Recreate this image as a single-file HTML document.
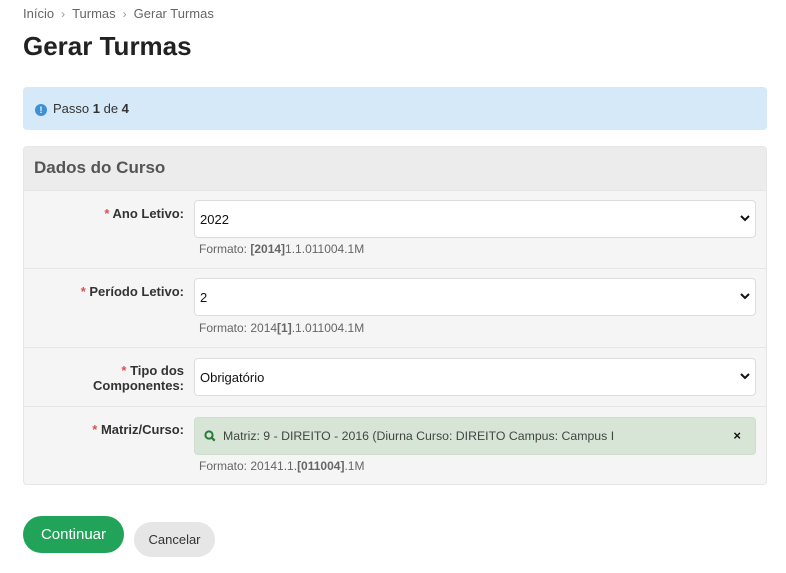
<!DOCTYPE html>
<html><head><meta charset="utf-8"><style>
*{box-sizing:border-box}
body{margin:0;width:786px;height:573px;background:#fff;font-family:"Liberation Sans",sans-serif;color:#333;position:relative;overflow:hidden}
.a{position:absolute}
.bc{left:23px;top:6px;font-size:13px;color:#666}
.bc span{color:#999;margin:0 7px;font-size:12px}
h1{position:absolute;left:23px;top:31px;margin:0;font-size:26px;font-weight:bold;color:#222}
.alert{left:23px;top:87px;width:744px;height:43px;background:#d6e9f8;border-radius:4px;font-size:13px;color:#333;padding:14px 0 0 30px}
.ic{position:absolute;left:12px;top:17px;width:12px;height:12px;border-radius:50%;background:#3d8fd6;color:#fff;font-size:9px;font-weight:bold;text-align:center;line-height:12px}
.panel{left:23px;top:146px;width:744px;height:339px;background:#f5f5f5;border:1px solid #e6e6e6;border-radius:4px;overflow:hidden}
.ph{height:43px;background:#ececec;font-size:17px;font-weight:bold;color:#555;padding:11px 0 0 10px}
.row{position:absolute;left:0;width:742px;border-top:1px solid #e6e6e6}
.lab{position:absolute;right:582px;text-align:right;font-size:13px;font-weight:bold;color:#333;line-height:15px}
.lab b{color:#d9534f}
.sel{position:absolute;left:170px;width:562px;height:38px;background:#fff;border:1px solid #ddd;border-radius:4px;font-size:13px;color:#111;padding:11px 0 0 5px}
.sel svg{position:absolute;right:5px;top:14px}
.help{position:absolute;left:175px;font-size:12px;color:#666}
.btn1{left:23px;top:516px;width:101px;height:37px;background:#22a35a;border-radius:19px;color:#fff;font-size:15px;text-align:center;line-height:37px}
.btn2{left:134px;top:522px;width:81px;height:35px;background:#e6e6e6;border-radius:18px;color:#333;font-size:13px;text-align:center;line-height:35px}
</style></head><body>
<div class="a bc">Início<span>›</span>Turmas<span>›</span>Gerar Turmas</div>
<h1>Gerar Turmas</h1>
<div class="a alert"><div class="ic">!</div>Passo <b>1</b> de <b>4</b></div>
<div class="a panel">
<div class="ph">Dados do Curso</div>
<div class="row" style="top:43px;height:78px">
<div class="lab" style="top:15px"><b>*</b> Ano Letivo:</div>
<div class="sel" style="top:9px">2022<svg width="10" height="7" viewBox="0 0 10 7"><path d="M1 1l4 4 4-4" stroke="#111" stroke-width="2" fill="none"/></svg></div>
<div class="help" style="top:51px">Formato: <b>[2014]</b>1.1.011004.1M</div>
</div>
<div class="row" style="top:121px;height:79px">
<div class="lab" style="top:15px"><b>*</b> Período Letivo:</div>
<div class="sel" style="top:9px">2<svg width="10" height="7" viewBox="0 0 10 7"><path d="M1 1l4 4 4-4" stroke="#111" stroke-width="2" fill="none"/></svg></div>
<div class="help" style="top:52px">Formato: 2014<b>[1]</b>.1.011004.1M</div>
</div>
<div class="row" style="top:200px;height:59px">
<div class="lab" style="top:15px"><b>*</b> Tipo dos<br>Componentes:</div>
<div class="sel" style="top:10px">Obrigatório<svg width="10" height="7" viewBox="0 0 10 7"><path d="M1 1l4 4 4-4" stroke="#111" stroke-width="2" fill="none"/></svg></div>
</div>
<div class="row" style="top:259px;height:80px">
<div class="lab" style="top:15px"><b>*</b> Matriz/Curso:</div>
<div class="sel" style="top:10px;background:#d6e5d6;border-color:#cfdccf;padding-left:28px;color:#444;font-size:12.3px">
<svg style="left:9px;top:12px;right:auto" width="12" height="12" viewBox="0 0 12 12"><circle cx="5" cy="5" r="3.6" stroke="#2a7a3a" stroke-width="2" fill="none"/><path d="M7.7 7.7l3 3" stroke="#2a7a3a" stroke-width="2.2"/></svg>
Matriz: 9 - DIREITO - 2016 (Diurna Curso: DIREITO Campus: Campus I<span style="position:absolute;right:14px;top:10px;font-weight:bold;color:#111;font-size:13px">×</span></div>
<div class="help" style="top:52px">Formato: 20141.1.<b>[011004]</b>.1M</div>
</div>
</div>
<div class="a btn1">Continuar</div>
<div class="a btn2">Cancelar</div>
</body></html>
